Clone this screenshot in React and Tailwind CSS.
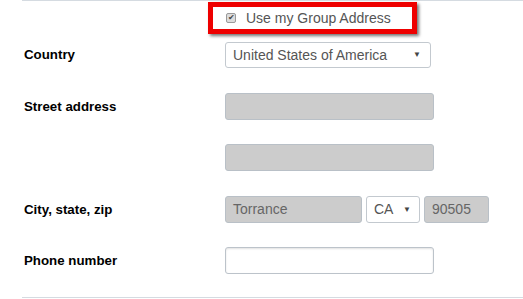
import React from 'react';

const Arrow = () => (
  <span className="text-[8px] leading-none text-[#444]">▼</span>
);

const Row = ({ label, children, className = '' }) => (
  <div className={`flex items-center ${className}`}>
    <div className="w-[203px] pl-[2px] text-[13.3px] font-bold text-black">{label}</div>
    <div className="flex items-center gap-[4px]">{children}</div>
  </div>
);

const grayInput = 'h-[27px] rounded-[3px] border border-[#b9c0c7] bg-[#cccccc] px-[7px] text-[14px] leading-[25px] text-[#666]';

export default function App() {
  return (
    <div className="h-[299px] w-[523px] overflow-hidden bg-white font-['Liberation_Sans',Arial,sans-serif]">
      <div className="ml-[22px] h-[298px] border-t border-b border-[#d5dbe1]">
        <div className="ml-[186px] mt-px flex h-[32px] w-[209px] items-center border-[5px] border-[#ee0000] shadow-[2px_2px_3px_rgba(0,0,0,0.55)]">
          <span className="ml-[13px] flex h-[10px] w-[10px] items-center justify-center rounded-[2px] border border-[#9a9a9a] bg-[#dcdcdc] text-[8px] leading-none text-[#444]">
            ✔
          </span>
          <span className="ml-[10px] text-[14px] text-[#555]">Use my Group Address</span>
        </div>

        <Row label="Country" className="mt-[8px]">
          <div className="flex h-[26px] w-[206px] items-center justify-between rounded-[3px] border border-[#c3c9cf] bg-white pl-[7px] pr-[9px] text-[14px] text-[#555]">
            <span>United States of America</span>
            <Arrow />
          </div>
        </Row>

        <Row label="Street address" className="mt-[25px]">
          <div className={`${grayInput} w-[209px]`} />
        </Row>

        <Row label="" className="mt-[24px]">
          <div className={`${grayInput} w-[209px]`} />
        </Row>

        <Row label="City, state, zip" className="mt-[25px]">
          <div className={`${grayInput} w-[137px]`}>Torrance</div>
          <div className="flex h-[27px] w-[54px] items-center justify-between rounded-[3px] border border-[#c3c9cf] bg-white pl-[7px] pr-[8px] text-[14px] text-[#555]">
            <span>CA</span>
            <Arrow />
          </div>
          <div className={`${grayInput} w-[65px] px-[4px]`}>90505</div>
        </Row>

        <Row label="Phone number" className="mt-[24px]">
          <div className="h-[27px] w-[209px] rounded-[3px] border border-[#bcc3ca] bg-white shadow-[inset_0_1px_2px_rgba(0,0,0,0.12)]" />
        </Row>
      </div>
    </div>
  );
}
